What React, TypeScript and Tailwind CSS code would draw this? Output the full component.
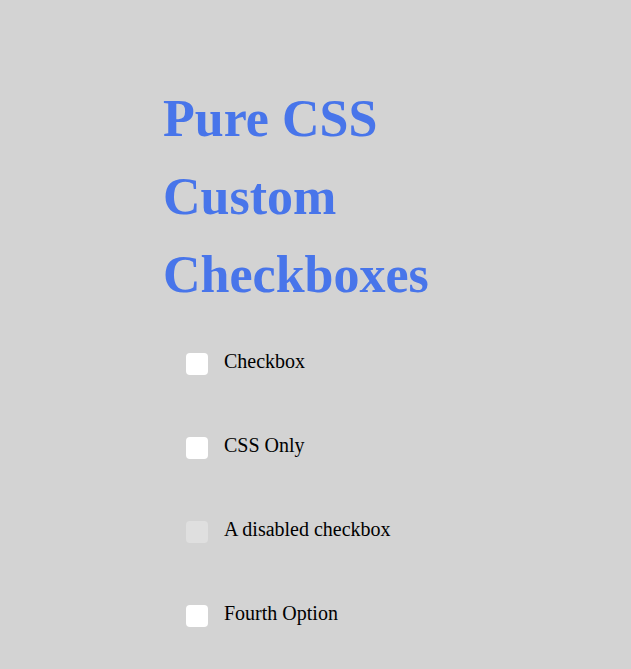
const options = [
  { id: 'c1', label: 'Checkbox', disabled: false },
  { id: 'c2', label: 'CSS Only', disabled: false },
  { id: 'c3', label: 'A disabled checkbox', disabled: true },
  { id: 'c4', label: 'Fourth Option', disabled: false },
];

export default function App() {
  return (
    <div className="min-h-screen bg-[#d3d3d3] pt-[80px] pl-[163px] font-['Liberation_Serif',serif] text-black">
      <h1 className="w-[300px] text-[52px] leading-[78px] font-bold text-[#4875ea]">
        Pure CSS Custom Checkboxes
      </h1>

      <ul className="mt-[39px] pl-[23px] flex flex-col gap-[62px]">
        {options.map((opt) => (
          <li key={opt.id} className="flex h-[22px] items-center gap-4">
            <label className="flex items-center gap-4 cursor-pointer">
              <input type="checkbox" id={opt.id} disabled={opt.disabled} className="peer sr-only" />
              <span
                className={`block h-[22px] w-[22px] rounded-[4px] ${
                  opt.disabled ? 'bg-[#dfdfdf]' : 'bg-white'
                }`}
              />
              <span className="text-[20px] leading-none -mt-[7px]">{opt.label}</span>
            </label>
          </li>
        ))}
      </ul>
    </div>
  );
}
